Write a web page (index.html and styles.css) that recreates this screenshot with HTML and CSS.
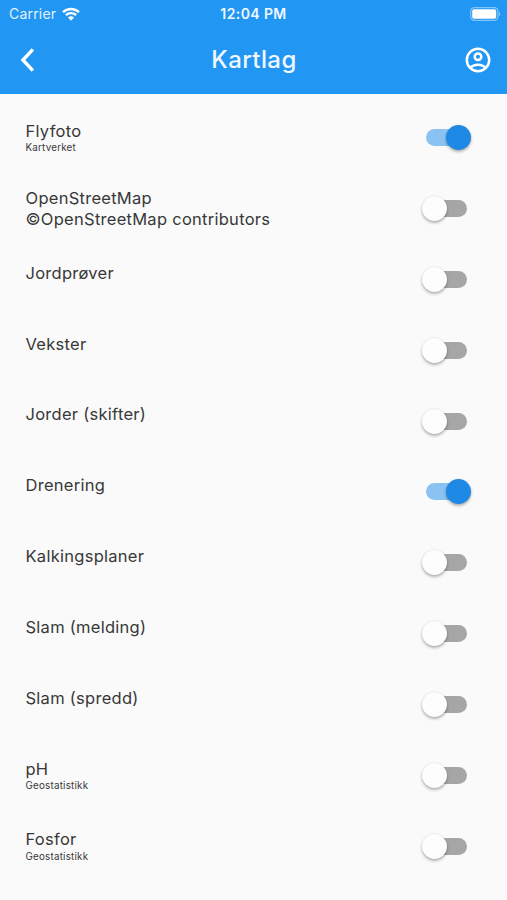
FILE: index.html
```html
<!DOCTYPE html>
<html lang="nb">
<head>
    <meta charset="UTF-8">
    <meta name="viewport" content="width=device-width, initial-scale=1.0">
    <title>Kartlag</title>
    <link rel="stylesheet" href="styles.css">
</head>
<body>

<header class="header">
    <div class="status-bar">
        <div class="carrier">
            <span>Carrier</span>
            <svg class="wifi" viewBox="0 0 18 14">
                <path d="M1 5.2a11.5 11.5 0 0 1 16 0" />
                <path d="M3.9 8.2a7.3 7.3 0 0 1 10.2 0" />
                <path class="dot" d="M9 13.7l3-3.1a4.3 4.3 0 0 0-6 0z" />
            </svg>
        </div>
        <span class="time">12:04 PM</span>
        <svg class="battery" viewBox="0 0 31 14">
            <rect class="case" x=".7" y=".7" width="27.2" height="12.6" rx="3.6" />
            <rect class="level" x="2.2" y="2.2" width="24" height="9.6" rx="1.8" />
            <path class="cap" d="M29 4.8v4.4a2.5 2.5 0 0 0 0-4.4z" />
        </svg>
    </div>
    <div class="app-bar">
        <svg class="back" viewBox="0 0 14 24"><path d="M12.4 1.3L2.4 12l10 10.7" /></svg>
        <h1>Kartlag</h1>
        <svg class="account" viewBox="0 0 26 26">
            <circle cx="13" cy="13" r="11.2" />
            <circle cx="13" cy="9.8" r="3.3" />
            <path d="M5.4 20.8c1.7-2.1 4.5-3.1 7.6-3.1s5.9 1 7.6 3.1" />
        </svg>
    </div>
</header>

<main class="layers">
    <div class="layer">
        <div class="text"><p class="name">Flyfoto</p><p class="source">Kartverket</p></div>
        <button class="switch on" aria-label="Flyfoto"></button>
    </div>
    <div class="layer">
        <div class="text"><p class="name">OpenStreetMap</p><p class="name">©OpenStreetMap contributors</p></div>
        <button class="switch" aria-label="OpenStreetMap"></button>
    </div>
    <div class="layer">
        <div class="text"><p class="name">Jordprøver</p><p class="source"></p></div>
        <button class="switch" aria-label="Jordprøver"></button>
    </div>
    <div class="layer">
        <div class="text"><p class="name">Vekster</p><p class="source"></p></div>
        <button class="switch" aria-label="Vekster"></button>
    </div>
    <div class="layer">
        <div class="text"><p class="name">Jorder (skifter)</p><p class="source"></p></div>
        <button class="switch" aria-label="Jorder (skifter)"></button>
    </div>
    <div class="layer">
        <div class="text"><p class="name">Drenering</p><p class="source"></p></div>
        <button class="switch on" aria-label="Drenering"></button>
    </div>
    <div class="layer">
        <div class="text"><p class="name">Kalkingsplaner</p><p class="source"></p></div>
        <button class="switch" aria-label="Kalkingsplaner"></button>
    </div>
    <div class="layer">
        <div class="text"><p class="name">Slam (melding)</p><p class="source"></p></div>
        <button class="switch" aria-label="Slam (melding)"></button>
    </div>
    <div class="layer">
        <div class="text"><p class="name">Slam (spredd)</p><p class="source"></p></div>
        <button class="switch" aria-label="Slam (spredd)"></button>
    </div>
    <div class="layer">
        <div class="text"><p class="name">pH</p><p class="source">Geostatistikk</p></div>
        <button class="switch" aria-label="pH"></button>
    </div>
    <div class="layer">
        <div class="text"><p class="name">Fosfor</p><p class="source">Geostatistikk</p></div>
        <button class="switch" aria-label="Fosfor"></button>
    </div>
</main>

<script>
    document.querySelectorAll('.switch').forEach(button => {
        button.addEventListener('click', () => button.classList.toggle('on'));
    });
</script>

</body>
</html>
```
FILE: styles.css
```css
* {
    box-sizing: border-box;
}
body {
    margin: 0;
    background: #fafafa;
    color: #383838;
    font-family: Inter, "Liberation Sans", sans-serif;
}
h1, p {
    margin: 0;
}
svg {
    display: block;
    fill: none;
    stroke: #fff;
}

/* header */
.header {
    height: 94px;
    background: #2196f3;
    color: #fff;
}
.status-bar {
    display: grid;
    grid-template-columns: 1fr auto 1fr;
    align-items: center;
    height: 26px;
    padding: 2px 6px 0 9px;
    font-size: 14px;
    line-height: 24px;
}
.carrier {
    display: flex;
    align-items: center;
    gap: 6px;
    letter-spacing: 0.2px;
    color: #e3f2fe;
}
.wifi {
    width: 18px;
    height: 14px;
    stroke-width: 2.4;
}
.wifi .dot {
    fill: #fff;
    stroke: none;
}
.time {
    margin-right: 3px;
    color: #f0f8ff;
    font-size: 14px;
    font-weight: 600;
    letter-spacing: 0.4px;
}
.battery {
    justify-self: end;
    width: 31px;
    height: 14px;
}
.battery .case {
    stroke: #85c4f8;
    stroke-width: 1.2;
}
.battery .level {
    fill: #fff;
    stroke: none;
}
.battery .cap {
    fill: #85c4f8;
    stroke: none;
}
.app-bar {
    display: grid;
    grid-template-columns: 1fr auto 1fr;
    align-items: center;
    height: 68px;
    padding: 0 16px 0 20px;
}
.back {
    width: 15px;
    height: 24px;
    stroke-width: 3.4;
}
h1 {
    margin-right: 3px;
    color: #f0f8ff;
    font-size: 24px;
    font-weight: 500;
    line-height: 30px;
    letter-spacing: 0.4px;
}
.account {
    justify-self: end;
    width: 26px;
    height: 26px;
    stroke-width: 2.5;
}

/* layer list */
.layers {
    padding: 8.3px 37px 0 25.5px;
}
.layer {
    display: flex;
    align-items: center;
    justify-content: space-between;
    height: 70.85px;
}
.name {
    font-size: 16.5px;
    line-height: 20.5px;
    letter-spacing: 0.27px;
}
.source {
    height: 13px;
    font-size: 9.8px;
    line-height: 14px;
    letter-spacing: 0.22px;
}

/* switch */
.switch {
    position: relative;
    width: 44px;
    height: 26px;
    padding: 0;
    border: none;
    background: none;
    cursor: pointer;
}
.switch::before {
    content: "";
    position: absolute;
    top: 4.5px;
    left: 0;
    width: 41px;
    height: 17px;
    border-radius: 9px;
    background: #a6a6a6;
}
.switch::after {
    content: "";
    position: absolute;
    top: 0.5px;
    left: -4px;
    width: 25px;
    height: 25px;
    border-radius: 50%;
    background: #fdfdfd;
    box-shadow: 0 2px 3px rgba(0, 0, 0, 0.28), 0 0 2px rgba(0, 0, 0, 0.12);
}
.switch.on::before {
    background: #8ac2f2;
}
.switch.on::after {
    left: 19.5px;
    background: #1e88e5;
}
```
